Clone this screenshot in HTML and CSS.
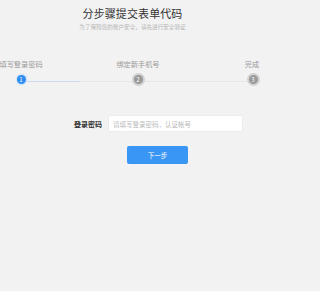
FILE: index.html
```html
<!DOCTYPE html>
<html lang="zh-CN">
<head>
<meta charset="utf-8">
<title>分步骤提交表单代码</title>
<link rel="stylesheet" href="styles.css">
</head>
<body>
<div class="page">
  <header class="header">
    <h1 class="title">分步骤提交表单代码</h1>
    <p class="subtitle">为了保障您的账户安全，请先进行安全验证</p>
  </header>

  <div class="steps">
    <div class="track"></div>
    <div class="track-done"></div>
    <div class="step step-1 active">
      <span class="step-label">填写登录密码</span>
      <span class="step-dot">1</span>
    </div>
    <div class="step step-2">
      <span class="step-label">绑定新手机号</span>
      <span class="step-dot">2</span>
    </div>
    <div class="step step-3">
      <span class="step-label">完成</span>
      <span class="step-dot">3</span>
    </div>
  </div>

  <form class="form">
    <div class="form-row">
      <label class="form-label">登录密码</label>
      <input class="form-input" type="text" placeholder="请填写登录密码，认证帐号">
    </div>
    <div class="form-row form-actions">
      <span class="form-label"></span>
      <button type="button" class="btn-next">下一步</button>
    </div>
  </form>
</div>
</body>
</html>
```

FILE: styles.css
```css
html, body {
  margin: 0;
  padding: 0;
  background: #f2f2f2;
}

body {
  font-family: "Noto Sans CJK SC", "Noto Sans", sans-serif;
  color: #333;
  width: 265px;
  height: 291px;
  overflow: hidden;
}

.header {
  padding-top: 6px;
  text-align: center;
}

.title {
  margin: 0;
  font-size: 11px;
  line-height: 14px;
  font-weight: normal;
  color: #333;
  letter-spacing: 0.1px;
}

.subtitle {
  margin: 3px 0 0;
  font-size: 5.6px;
  line-height: 8px;
  color: #b5b5b5;
}

.steps {
  position: relative;
  display: flex;
  margin-top: 28px;
}

.track {
  position: absolute;
  left: 27px;
  right: 18px;
  top: 22px;
  height: 1px;
  background: #e6e6e6;
}

.track-done {
  position: absolute;
  left: 27px;
  width: 53px;
  top: 22px;
  height: 1px;
  background: #c9dbef;
}

.step {
  position: relative;
  display: flex;
  flex-direction: column;
  align-items: center;
}

.step-1 { width: 42px; }
.step-2 { width: 44px; margin-left: 74px; }
.step-3 { width: 24px; margin-left: 81px; }

.step-label {
  font-size: 7.2px;
  line-height: 10px;
  color: #999;
  white-space: nowrap;
}

.step-3 .step-label {
  margin-left: -2px;
}

.step-dot {
  margin-top: 6px;
  width: 9px;
  height: 9px;
  border-radius: 50%;
  background: #9a9a9a;
  box-shadow: 0 0 0 2px #d2d2d2;
  color: #fff;
  font-size: 6px;
  line-height: 9px;
  text-align: center;
}

.active .step-dot {
  background: #2e8cf0;
  box-shadow: 0 0 0 1.5px #d6e7fa;
}

.form {
  margin-top: 31px;
  padding-left: 70px;
}

.form-row {
  display: flex;
  align-items: center;
}

.form-label {
  width: 32px;
  margin-right: 6px;
  text-align: right;
  font-size: 7px;
  line-height: 10px;
  color: #333;
  font-weight: bold;
  white-space: nowrap;
}

.form-input {
  box-sizing: border-box;
  width: 135px;
  height: 17px;
  margin: 0;
  padding: 0 4px;
  border: 1px solid #ececec;
  border-radius: 2px;
  background: #fff;
  font-family: inherit;
  font-size: 6.5px;
  outline: none;
}

.form-input::placeholder {
  color: #b8b8b8;
}

.form-actions {
  margin-top: 14px;
}

.btn-next {
  box-sizing: border-box;
  width: 61px;
  height: 18px;
  margin: 0 0 0 19px;
  padding: 0;
  border: none;
  border-radius: 2px;
  background: #3a96f4;
  color: #fff;
  font-family: inherit;
  font-size: 6.5px;
  line-height: 18px;
  cursor: pointer;
}
```
